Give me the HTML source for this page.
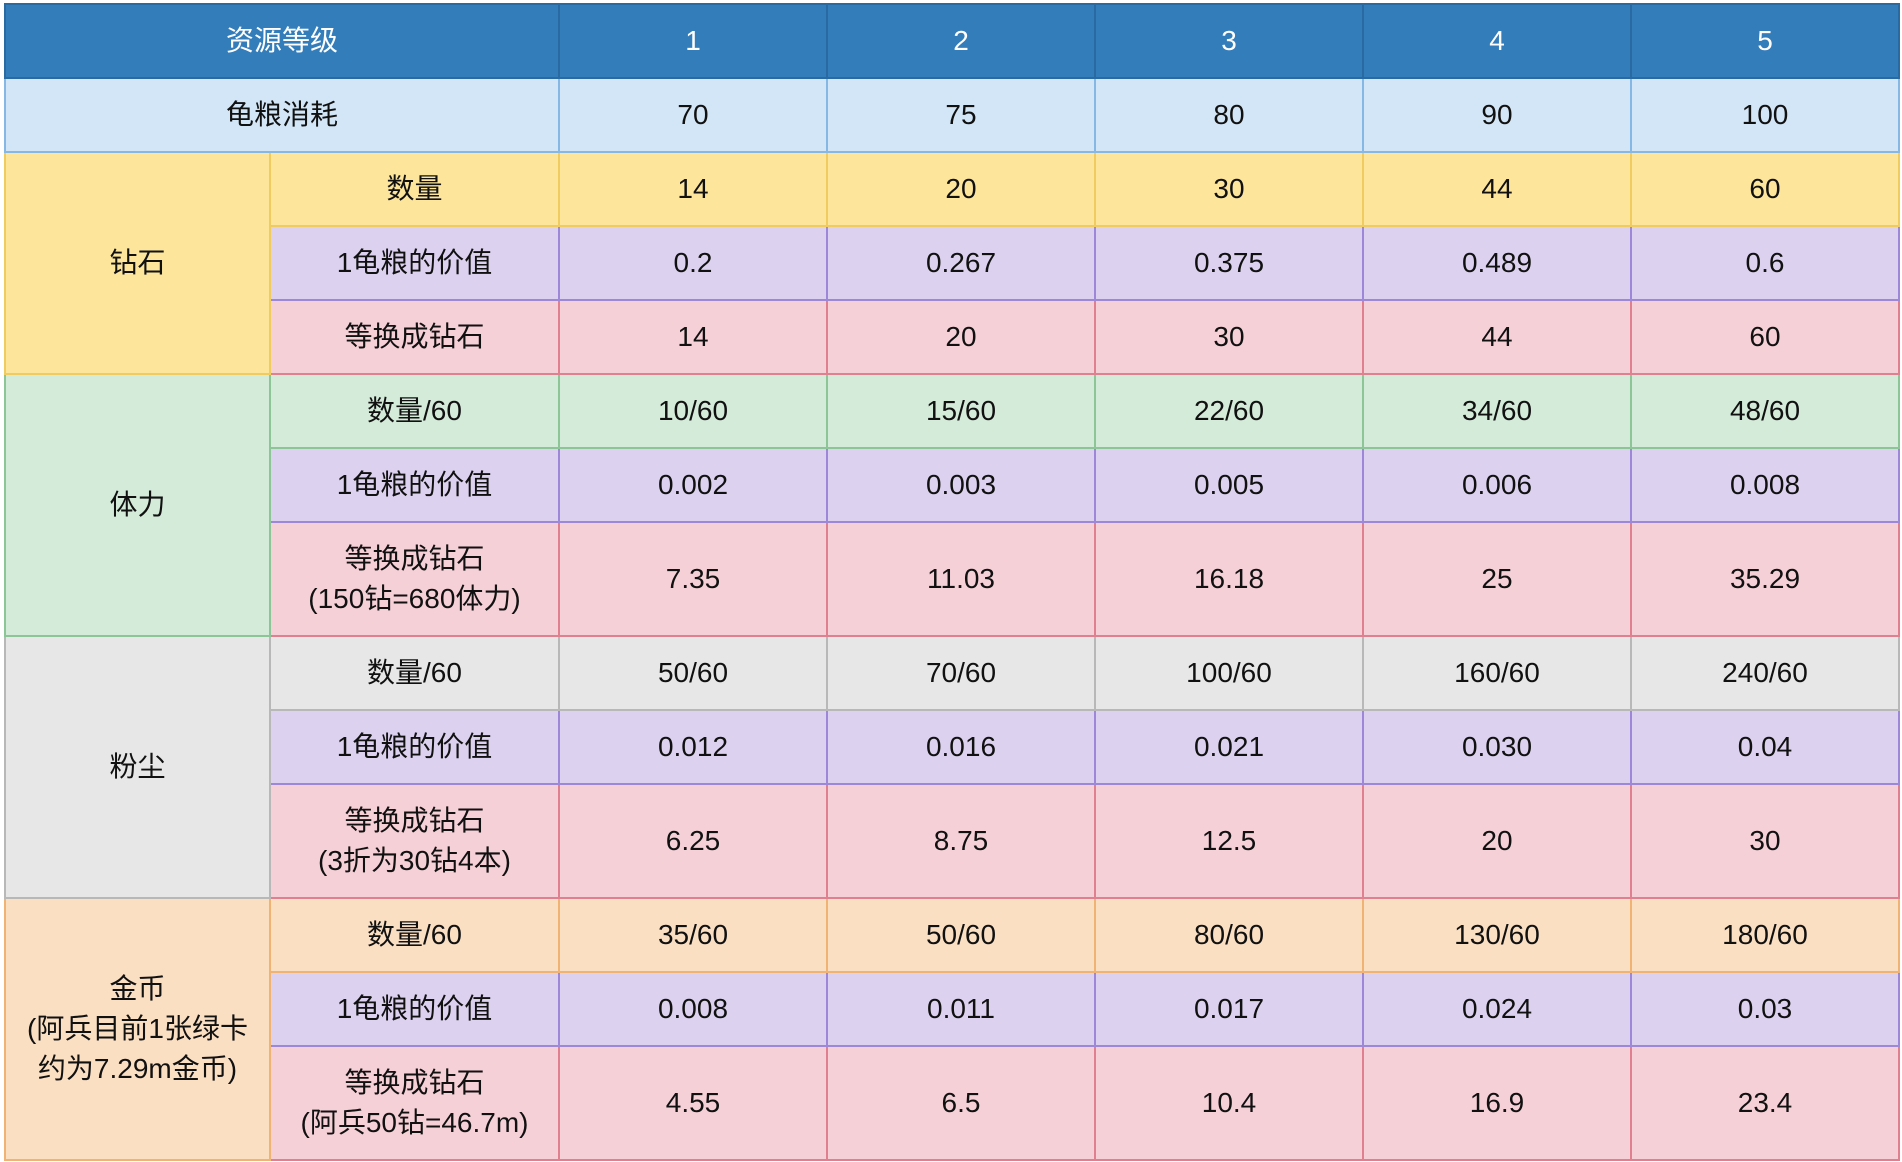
<!DOCTYPE html>
<html><head><meta charset="utf-8"><style>
html,body{margin:0;padding:0;background:#fff;width:1902px;height:1162px;overflow:hidden}
table{position:absolute;left:4px;top:3px;border-collapse:collapse;table-layout:fixed;font-family:"Liberation Sans","Noto Sans CJK SC",sans-serif;font-size:28px;color:#111}
td{text-align:center;vertical-align:middle;padding:0;border:2px solid #ccc;line-height:1.42}
.h td{background:#347dbb;color:#fff;border-color:#2a6aa3;height:72px}
.b td{background:#d3e6f7;border-color:#86b8e3;height:72px}
.y{background:#fde59c;border-color:#f0cc60!important}
.p td{background:#dcd2f0;border-color:#9d87d8;height:72px}
.k td{background:#f6d0d7;border-color:#e0808f;height:72px}
.g{background:#d4ebd9;border-color:#8cc596!important}
.e{background:#e7e7e7;border-color:#b8b8b8!important}
.o{background:#fbdfc3;border-color:#f0b374!important}
tr.t td{height:112px}
tr.r td{height:72px}
</style></head><body>
<table>
<colgroup><col style="width:265px"><col style="width:289px"><col style="width:268px"><col style="width:268px"><col style="width:268px"><col style="width:268px"><col style="width:268px"></colgroup>
<tr class="h"><td colspan="2">资源等级</td><td>1</td><td>2</td><td>3</td><td>4</td><td>5</td></tr>
<tr class="b"><td colspan="2">龟粮消耗</td><td>70</td><td>75</td><td>80</td><td>90</td><td>100</td></tr>
<tr class="r"><td rowspan="3" class="y">钻石</td><td class="y">数量</td><td class="y">14</td><td class="y">20</td><td class="y">30</td><td class="y">44</td><td class="y">60</td></tr>
<tr class="p"><td>1龟粮的价值</td><td>0.2</td><td>0.267</td><td>0.375</td><td>0.489</td><td>0.6</td></tr>
<tr class="k"><td>等换成钻石</td><td>14</td><td>20</td><td>30</td><td>44</td><td>60</td></tr>
<tr class="r"><td rowspan="3" class="g">体力</td><td class="g">数量/60</td><td class="g">10/60</td><td class="g">15/60</td><td class="g">22/60</td><td class="g">34/60</td><td class="g">48/60</td></tr>
<tr class="p"><td>1龟粮的价值</td><td>0.002</td><td>0.003</td><td>0.005</td><td>0.006</td><td>0.008</td></tr>
<tr class="k t"><td>等换成钻石<br>(150钻=680体力)</td><td>7.35</td><td>11.03</td><td>16.18</td><td>25</td><td>35.29</td></tr>
<tr class="r"><td rowspan="3" class="e">粉尘</td><td class="e">数量/60</td><td class="e">50/60</td><td class="e">70/60</td><td class="e">100/60</td><td class="e">160/60</td><td class="e">240/60</td></tr>
<tr class="p"><td>1龟粮的价值</td><td>0.012</td><td>0.016</td><td>0.021</td><td>0.030</td><td>0.04</td></tr>
<tr class="k t"><td>等换成钻石<br>(3折为30钻4本)</td><td>6.25</td><td>8.75</td><td>12.5</td><td>20</td><td>30</td></tr>
<tr class="r"><td rowspan="3" class="o">金币<br>(阿兵目前1张绿卡<br>约为7.29m金币)</td><td class="o">数量/60</td><td class="o">35/60</td><td class="o">50/60</td><td class="o">80/60</td><td class="o">130/60</td><td class="o">180/60</td></tr>
<tr class="p"><td>1龟粮的价值</td><td>0.008</td><td>0.011</td><td>0.017</td><td>0.024</td><td>0.03</td></tr>
<tr class="k t"><td>等换成钻石<br>(阿兵50钻=46.7m)</td><td>4.55</td><td>6.5</td><td>10.4</td><td>16.9</td><td>23.4</td></tr>
</table>
</body></html>
